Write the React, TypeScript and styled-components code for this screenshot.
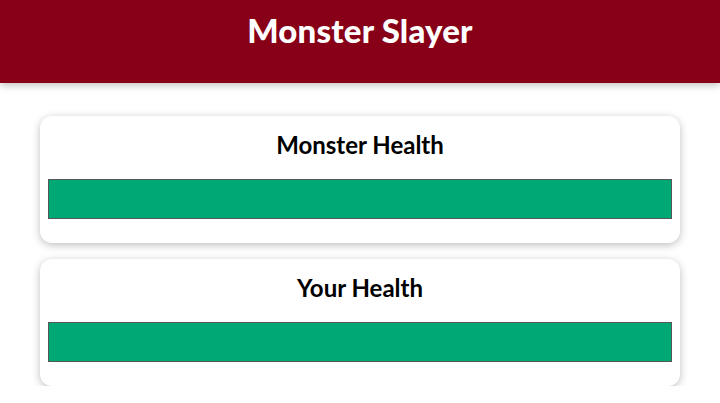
import React from "react";
import styled, { createGlobalStyle } from "styled-components";

const Global = createGlobalStyle`
  * { box-sizing: border-box; }
  html { font-family: "Lato", "Noto Sans", sans-serif; }
  body { margin: 0; background: #ffffff; }
`;

const Header = styled.header`
  background-color: #880017;
  color: #ffffff;
  text-align: center;
  padding: 10px 8px 33px;
  box-shadow: 0 2px 8px rgba(0, 0, 0, 0.26);
`;

const Title = styled.h1`
  margin: 0;
  font-size: 33px;
  line-height: 40px;
  font-weight: 900;
  letter-spacing: 0.2px;
`;

const Section = styled.section`
  width: 90%;
  max-width: 640px;
  margin: 33px auto 0;
  display: flex;
  flex-direction: column;
  gap: 16px;
`;

const Card = styled.div`
  text-align: center;
  padding: 8px;
  border-radius: 12px;
  box-shadow: 0 2px 8px rgba(0, 0, 0, 0.26);
  background: #ffffff;
`;

const CardTitle = styled.h2`
  margin: 6px 0 19px;
  font-size: 24px;
  line-height: 30px;
  font-weight: 700;
  color: #000000;
`;

const HealthBar = styled.div`
  width: 100%;
  height: 40px;
  border: 1px solid #575757;
  margin-bottom: 16px;
  background: #fde5e5;
`;

const HealthValue = styled.div`
  background-color: #00a876;
  height: 100%;
`;

const Meter = ({ title, value }: { title: string; value: number }) => (
  <Card>
    <CardTitle>{title}</CardTitle>
    <HealthBar>
      <HealthValue style={{ width: `${value}%` }} />
    </HealthBar>
  </Card>
);

export default function App() {
  return (
    <>
      <Global />
      <Header>
        <Title>Monster Slayer</Title>
      </Header>
      <Section>
        <Meter title="Monster Health" value={100} />
        <Meter title="Your Health" value={100} />
      </Section>
    </>
  );
}
